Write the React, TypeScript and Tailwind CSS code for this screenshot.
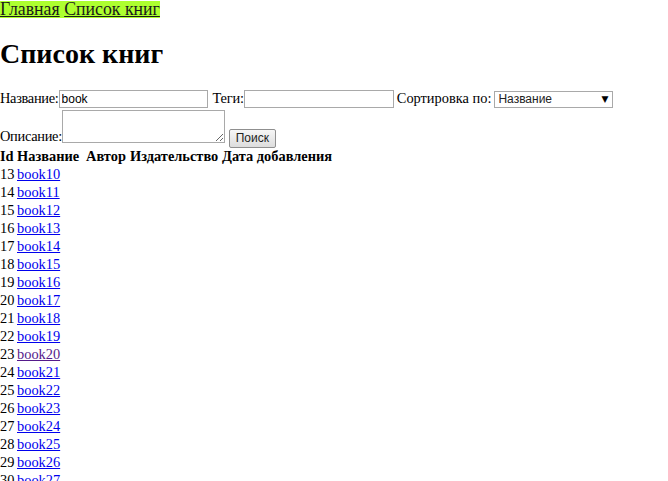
import { ChangeEvent, useState } from 'react'

type Book = {
    id: number
    title: string
    visited?: boolean
}

const books: Book[] = Array.from({ length: 24 }, (_, i) => ({
    id: 13 + i,
    title: `book${10 + i}`,
    visited: 13 + i === 23,
}))

function App() {
    const [title, setTitle] = useState('book')
    const [tags, setTags] = useState('')
    const [description, setDescription] = useState('')
    const [sort, setSort] = useState('title')

    return (
        <div className="min-h-screen bg-white text-black text-[14.4px] font-['Liberation_Serif','Times_New_Roman',serif]">
            {/* Top menu */}
            <div className="inline-flex h-[17px] items-center bg-[#adff2f] text-[17.8px] leading-[17px]">
                <a href="#" className="text-[#1a1a1a] underline">Главная</a>
                <span>&nbsp;</span>
                <a href="#" className="text-[#1a1a1a] underline">Список книг</a>
            </div>

            <h1 className="mt-[16px] mb-0 text-[28px] font-bold leading-[32px]">Список книг</h1>

            {/* Search form */}
            <form className="mt-[19px]" onSubmit={(e) => e.preventDefault()}>
                <div className="flex h-[20px] items-start whitespace-nowrap">
                    <label className="leading-[18px] tracking-[-0.3px]">Название:</label>
                    <input
                        value={title}
                        onChange={(e: ChangeEvent<HTMLInputElement>) => setTitle(e.target.value)}
                        className="mt-[1px] h-[18px] w-[149px] border border-[#a9a9a9] px-[2px] text-[12px] leading-[16px] font-['Liberation_Sans',Arial,sans-serif] outline-none"
                    />
                    <label className="ml-[5px] leading-[18px] tracking-[-0.2px]">Теги:</label>
                    <input
                        value={tags}
                        onChange={(e: ChangeEvent<HTMLInputElement>) => setTags(e.target.value)}
                        className="mt-[1px] h-[18px] w-[150px] border border-[#a9a9a9] px-[2px] text-[12px] leading-[16px] font-['Liberation_Sans',Arial,sans-serif] outline-none"
                    />
                    <label className="ml-[3px] mr-[3px] leading-[18px]">Сортировка по:</label>
                    <div className="relative mt-[2px] h-[17px] w-[119px] border border-[#a9a9a9] bg-white">
                        <select
                            value={sort}
                            onChange={(e: ChangeEvent<HTMLSelectElement>) => setSort(e.target.value)}
                            className="block h-[15px] w-full appearance-none bg-transparent py-0 pl-[3px] text-[12px] leading-[15px] text-[#222] font-['Liberation_Sans',Arial,sans-serif] outline-none"
                        >
                            <option value="title">Название</option>
                            <option value="author">Автор</option>
                            <option value="date">Дата добавления</option>
                        </select>
                        <span className="pointer-events-none absolute right-[4px] top-[1px] text-[9px] leading-[13px] font-['DejaVu_Sans',sans-serif]">▼</span>
                    </div>
                </div>
                <div className="flex h-[38px] items-start whitespace-nowrap">
                    <label className="mt-[18px] leading-[18px] tracking-[-0.3px]">Описание:</label>
                    <textarea
                        value={description}
                        onChange={(e: ChangeEvent<HTMLTextAreaElement>) => setDescription(e.target.value)}
                        className="mt-[1px] h-[33px] w-[163px] resize border border-[#a9a9a9] p-[2px] text-[12px] font-['Liberation_Mono',monospace] outline-none"
                    />
                    <button
                        type="submit"
                        className="mt-[20px] ml-[4px] h-[19px] w-[47px] rounded-[2px] border border-[#8f8f8f] bg-gradient-to-b from-[#f6f6f6] to-[#dddddd] text-[12px] leading-[17px] text-[#222] font-['Liberation_Sans',Arial,sans-serif]"
                    >
                        Поиск
                    </button>
                </div>
            </form>

            {/* Books table */}
            <div className="grid grid-cols-[17px_69px_44px_92px_auto] leading-[18px]">
                <div className="font-bold">Id</div>
                <div className="font-bold">Название</div>
                <div className="font-bold">Автор</div>
                <div className="font-bold">Издательство</div>
                <div className="font-bold">Дата добавления</div>
                {books.map((book) => (
                    <div key={book.id} className="contents">
                        <div>{book.id}</div>
                        <div>
                            <a
                                href="#"
                                className={book.visited ? 'text-[#551a8b] underline' : 'text-[#0000ee] underline'}
                            >
                                {book.title}
                            </a>
                        </div>
                        <div></div>
                        <div></div>
                        <div></div>
                    </div>
                ))}
            </div>
        </div>
    )
}

export default App
